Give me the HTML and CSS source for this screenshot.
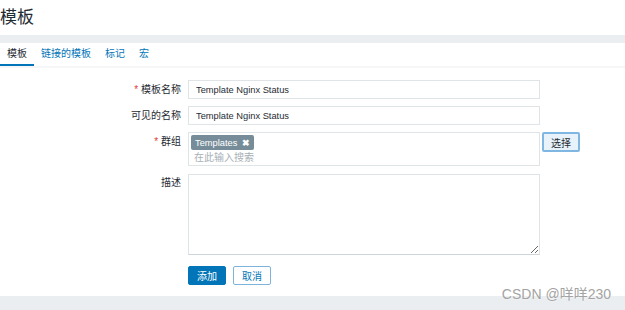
FILE: index.html
```html
<!DOCTYPE html>
<html lang="zh-CN">
<head>
    <meta charset="UTF-8">
    <title>模板</title>
    <link rel="stylesheet" href="styles.css">
</head>
<body>

    <header class="page-header">
        <h1>模板</h1>
    </header>

    <div class="band"></div>

    <nav class="tabs">
        <a class="tab active">模板</a>
        <a class="tab">链接的模板</a>
        <a class="tab">标记</a>
        <a class="tab">宏</a>
    </nav>

    <form class="form-grid">
        <label class="form-label"><span class="req">*</span> 模板名称</label>
        <input class="text-input" type="text" value="Template Nginx Status">
        <div></div>

        <label class="form-label">可见的名称</label>
        <input class="text-input" type="text" value="Template Nginx Status">
        <div></div>

        <label class="form-label"><span class="req">*</span> 群组</label>
        <div class="multiselect">
            <span class="tag">Templates <span class="tag-remove">✖</span></span>
            <span class="placeholder">在此输入搜索</span>
        </div>
        <div><button type="button" class="btn-select">选择</button></div>

        <label class="form-label label-top">描述</label>
        <textarea class="text-area"></textarea>
        <div></div>

        <div></div>
        <div class="form-actions">
            <button type="button" class="btn-primary">添加</button>
            <button type="button" class="btn-alt">取消</button>
        </div>
        <div></div>
    </form>

    <div class="band band-bottom"></div>

    <!-- watermark over the bottom band -->
    <div class="watermark">CSDN @咩咩230</div>

</body>
</html>
```

FILE: styles.css
```css
:root {
    --band-color: #ebeef0;
    --border-color: #dfe4e7;
    --text-color: #1f2c33;
    --link-color: #0275b8;
    --required-color: #e33734;
}

* {
    box-sizing: border-box;
}

body {
    margin: 0;
    font-family: "Liberation Sans", "Noto Sans CJK SC", sans-serif;
    color: var(--text-color);
    background-color: #ffffff;
    height: 310px;
    overflow: hidden;
    position: relative;
}

.page-header {
    height: 35px;
    display: flex;
    align-items: center;
}

.page-header h1 {
    margin: 0;
    font-size: 17px;
    font-weight: normal;
    line-height: 1;
    padding-bottom: 1px;
}

.band {
    height: 8px;
    background-color: var(--band-color);
}

.tabs {
    display: flex;
    height: 25px;
    border-bottom: 2px solid #f4f6f7;
}

.tab {
    padding: 0 7px;
    font-size: 10px;
    line-height: 21px;
    color: var(--link-color);
    border-bottom: 2px solid transparent;
}

.tab.active {
    color: var(--text-color);
    border-bottom-color: var(--link-color);
}

.form-grid {
    display: grid;
    grid-template-columns: 181px 352px auto;
    column-gap: 7px;
    row-gap: 7px;
    margin-top: 12px;
    align-items: start;
}

.form-label {
    text-align: right;
    font-size: 10px;
    line-height: 19px;
}

.req {
    color: var(--required-color);
}

.text-input {
    height: 19px;
    margin: 0;
    border: 1px solid var(--border-color);
    padding: 0 7px;
    font-family: inherit;
    font-size: 9.3px;
    color: var(--text-color);
    outline: none;
}

.multiselect {
    height: 34px;
    border: 1px solid var(--border-color);
    padding: 2px 2px 0 2px;
    display: flex;
    flex-direction: column;
    align-items: flex-start;
}

.tag {
    display: inline-flex;
    align-items: center;
    height: 15px;
    padding: 0 4px;
    background-color: #768d99;
    color: #ffffff;
    font-size: 9.3px;
    border-radius: 2px;
}

.tag-remove {
    margin-left: 5px;
    font-size: 9px;
    font-weight: bold;
}

.placeholder {
    margin-top: 1px;
    padding-left: 3px;
    font-size: 10px;
    line-height: 13px;
    color: #a8b0b5;
}

.btn-select {
    margin-left: -5px;
    width: 38px;
    height: 20px;
    padding: 0;
    font-family: inherit;
    font-size: 10px;
    color: var(--text-color);
    background-color: #e8f2fb;
    border: 2px solid #80b7e2;
    border-radius: 2px;
}

.text-area {
    margin: 1px 0 0 0;
    height: 81px;
    border: 1px solid var(--border-color);
    border-bottom-color: #ccd5da;
    font-family: inherit;
    resize: vertical;
    outline: none;
}

.form-actions {
    display: flex;
    gap: 7px;
    margin-top: 4px;
}

.btn-primary,
.btn-alt {
    width: 38px;
    height: 19px;
    padding: 0;
    font-family: inherit;
    font-size: 10px;
    border-radius: 2px;
}

.btn-primary {
    background-color: var(--link-color);
    border: 1px solid var(--link-color);
    color: #ffffff;
}

.btn-alt {
    background-color: #ffffff;
    border: 1px solid #7eb4dc;
    color: var(--link-color);
}

.band-bottom {
    margin-top: 11px;
    height: 20px;
}

.watermark {
    position: absolute;
    right: 14px;
    bottom: 7px;
    font-size: 14px;
    color: #a3a3a3;
    text-shadow: 0 0 2px #ffffff;
}
```
